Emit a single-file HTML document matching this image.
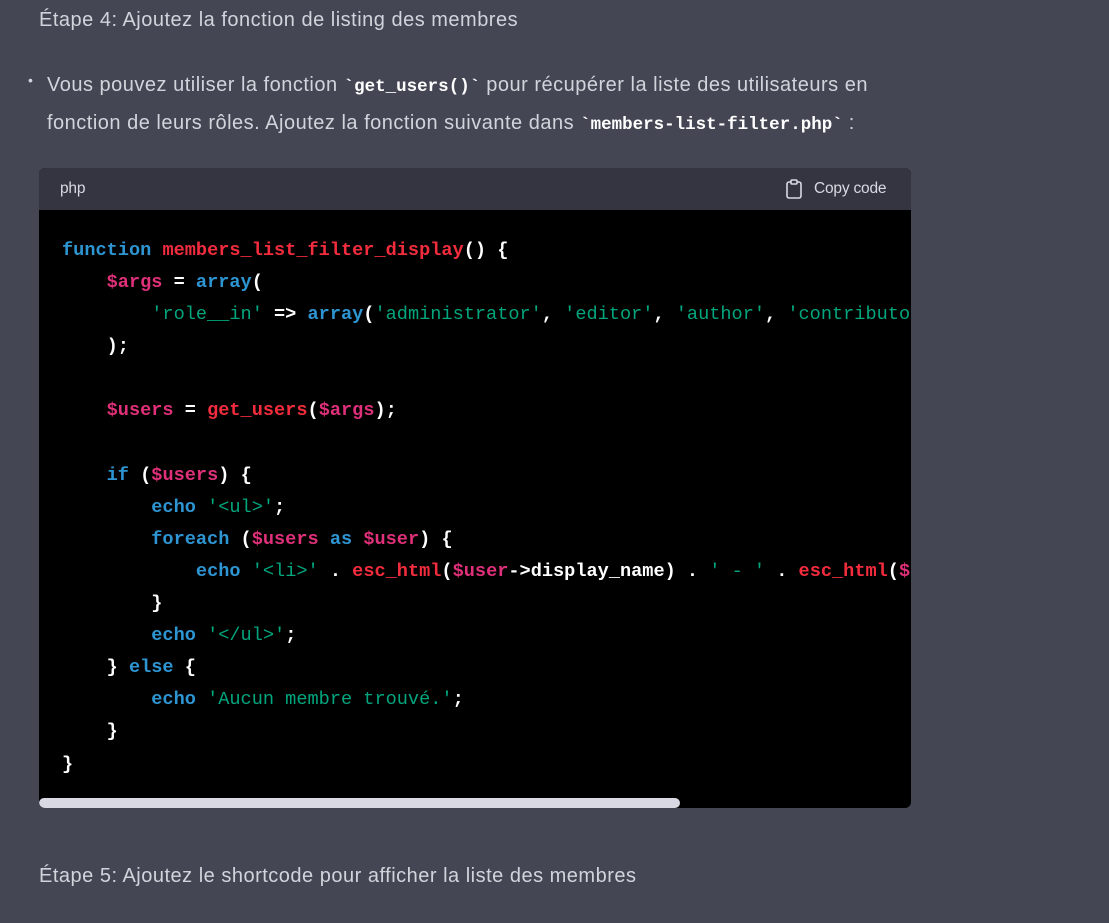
<!DOCTYPE html>
<html><head><meta charset="utf-8"><style>
html,body{margin:0;padding:0;background:#444654;width:1109px;height:923px;overflow:hidden}
body{font-family:"Liberation Sans",sans-serif;color:#d1d5db;font-size:20px;letter-spacing:0.5px;position:relative}
.t{position:absolute;white-space:nowrap}
code.i{font-family:"Liberation Mono",monospace;font-weight:bold;color:#fff;font-size:17.5px;letter-spacing:0}
.blk{position:absolute;left:39px;top:168px;width:872px;height:640px;background:#000;border-radius:6px;overflow:hidden}
.hd{height:42px;background:#343541;position:relative;font-size:15.5px;letter-spacing:-0.2px;color:#d9d9e3}
pre{margin:0;position:absolute;left:23px;top:67px;font-family:"Liberation Mono",monospace;font-size:18.6px;line-height:32.1px;color:#fff;letter-spacing:0;font-weight:bold}
.b{color:#2e95d3}.r{color:#f22c3d}.p{color:#df3079}.g{color:#00a67d;font-weight:normal}
.sb{position:absolute;left:0;top:630px;width:641px;height:10px;background:#d9d9e3;border-radius:5px}
</style></head><body>
<div class="t" style="left:39px;top:9px">Étape 4: Ajoutez la fonction de listing des membres</div>
<div class="t" style="left:28px;top:72px;font-size:14px">•</div>
<div class="t" style="left:47px;top:74px">Vous pouvez utiliser la fonction <code class="i">`get_users()`</code> pour récupérer la liste des utilisateurs en</div>
<div class="t" style="left:47px;top:112px">fonction de leurs rôles. Ajoutez la fonction suivante dans <code class="i">`members-list-filter.php`</code> :</div>
<div class="blk">
<div class="hd"><span style="position:absolute;left:21px;top:12px">php</span>
<svg style="position:absolute;left:746px;top:11px" width="18" height="20" viewBox="0 0 18 20" fill="none" stroke="#d9d9e3" stroke-width="1.6"><rect x="2" y="3" width="14" height="16" rx="2"/><rect x="6" y="1" width="6" height="4" rx="1" fill="#343541"/></svg>
<span style="position:absolute;left:775px;top:12px">Copy code</span></div>
<pre><span class="b">function</span> <span class="r">members_list_filter_display</span>() {
    <span class="p">$args</span> = <span class="b">array</span>(
        <span class="g">'role__in'</span> =&gt; <span class="b">array</span>(<span class="g">'administrator'</span>, <span class="g">'editor'</span>, <span class="g">'author'</span>, <span class="g">'contributor'</span>)
    );

    <span class="p">$users</span> = <span class="r">get_users</span>(<span class="p">$args</span>);

    <span class="b">if</span> (<span class="p">$users</span>) {
        <span class="b">echo</span> <span class="g">'&lt;ul&gt;'</span>;
        <span class="b">foreach</span> (<span class="p">$users</span> <span class="b">as</span> <span class="p">$user</span>) {
            <span class="b">echo</span> <span class="g">'&lt;li&gt;'</span> . <span class="r">esc_html</span>(<span class="p">$user</span>-&gt;display_name) . <span class="g">' - '</span> . <span class="r">esc_html</span>(<span class="p">$user</span>)
        }
        <span class="b">echo</span> <span class="g">'&lt;/ul&gt;'</span>;
    } <span class="b">else</span> {
        <span class="b">echo</span> <span class="g">'Aucun membre trouvé.'</span>;
    }
}</pre>
<div class="sb"></div>
</div>
<div class="t" style="left:39px;top:865px">Étape 5: Ajoutez le shortcode pour afficher la liste des membres</div>
</body></html>
